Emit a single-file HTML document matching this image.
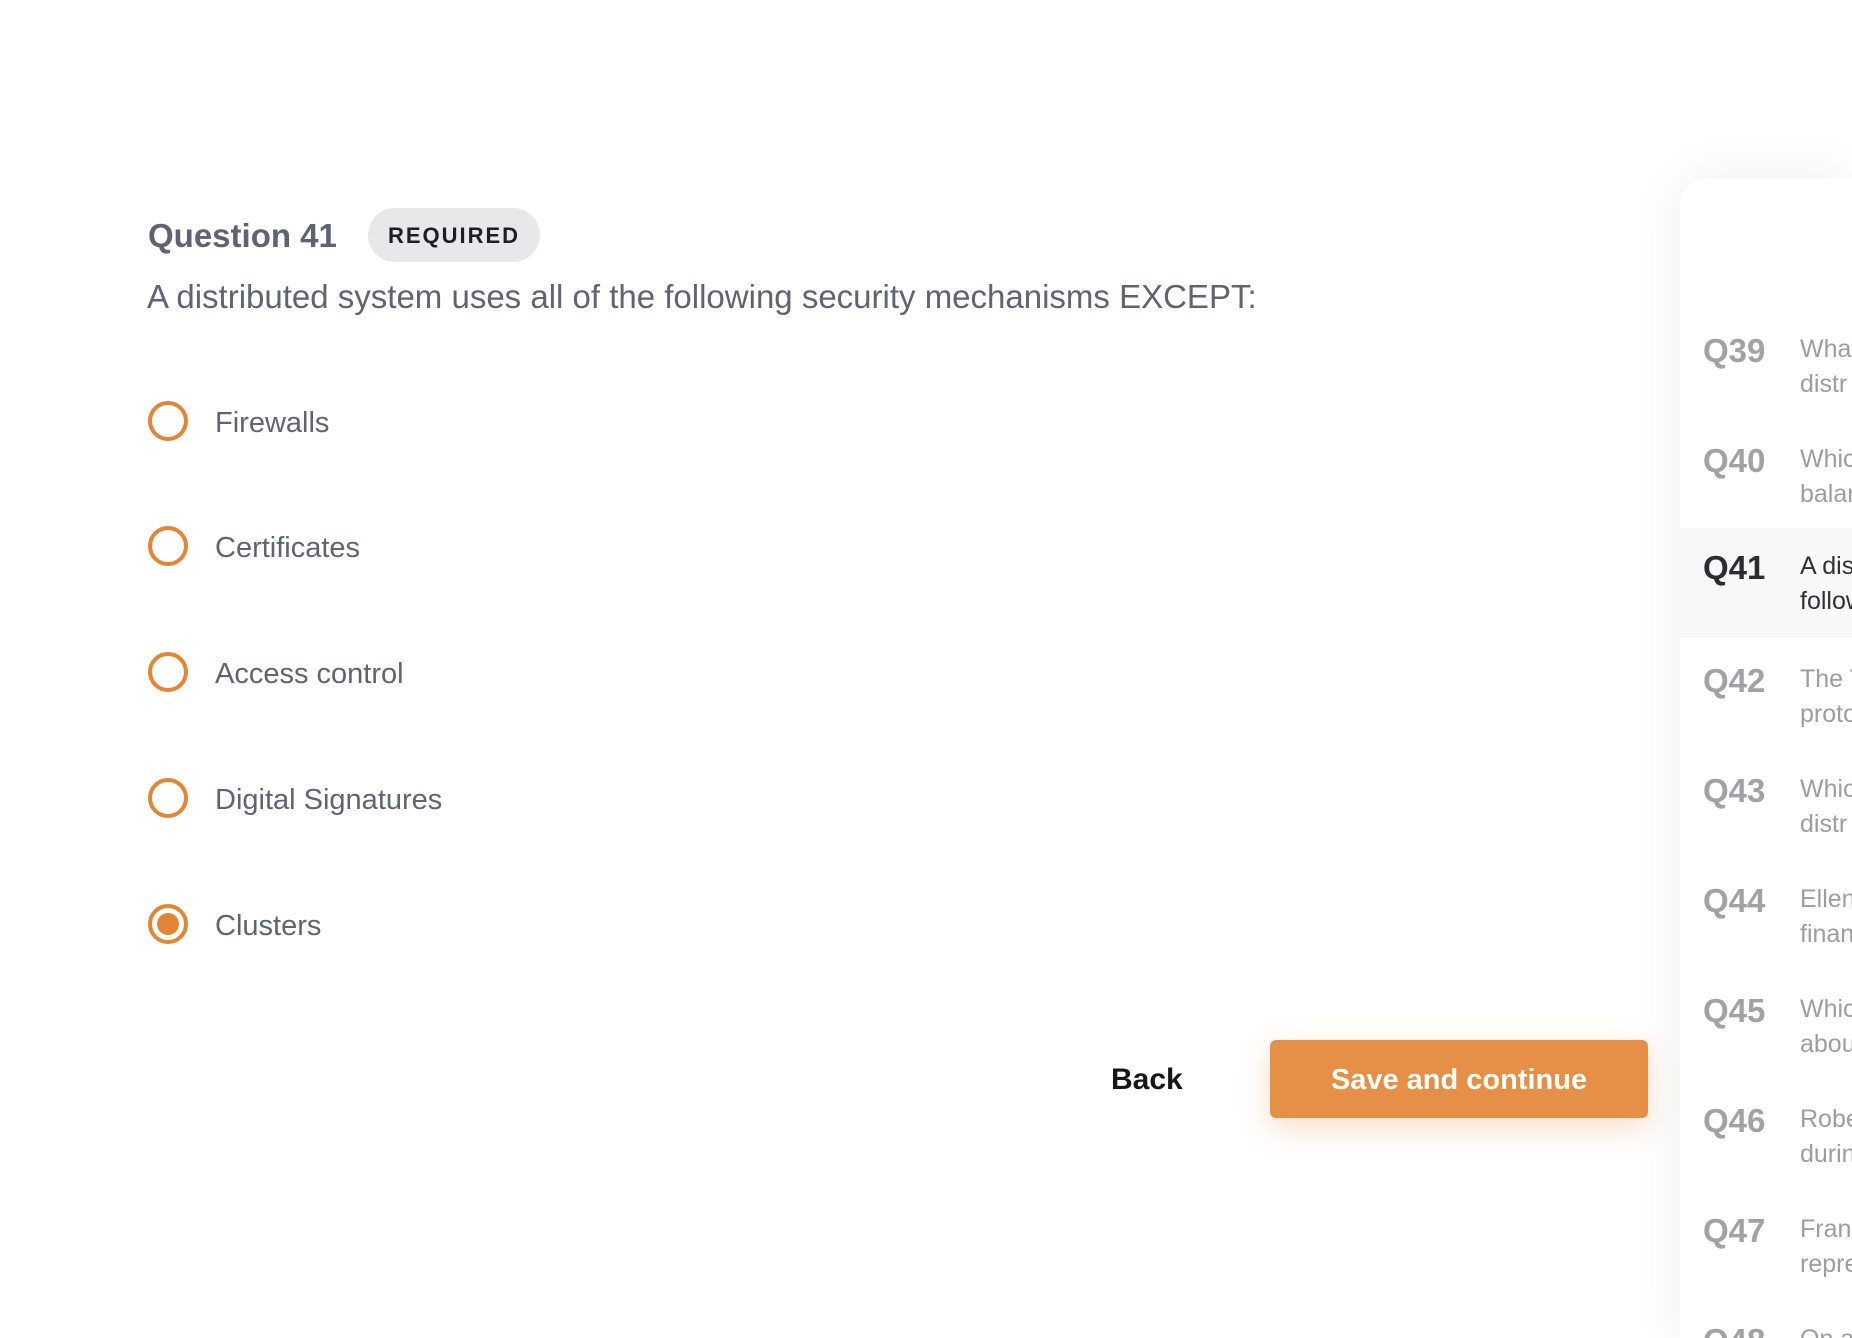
<!DOCTYPE html>
<html><head><meta charset="utf-8"><style>
*{margin:0;padding:0;box-sizing:border-box}
html{width:1852px;height:1338px;overflow:hidden}
body{width:1852px;height:1338px;background:#fff;font-family:"Liberation Sans",sans-serif;position:relative;overflow:hidden;color:#636675}
.abs{position:absolute;white-space:nowrap}
.qt{left:148px;top:217px;font-size:33px;font-weight:bold;color:#5f6270}
.badge{left:368px;top:208px;width:172px;height:54px;border-radius:27px;background:#e8e8ea;color:#1e1f24;font-weight:bold;font-size:22px;letter-spacing:2px;text-align:center;line-height:56px}
.qtext{left:147px;top:278px;font-size:33px;color:#606371}
.radio{position:absolute;left:148px;width:40px;height:40px;border:4px solid #e38533;border-radius:50%}
.radio.sel::after{content:"";position:absolute;left:5px;top:5px;width:22px;height:22px;border-radius:50%;background:#e38533}
.lbl{position:absolute;left:215px;font-size:29px;color:#606371;white-space:nowrap}
.back{left:1111px;top:1063px;font-size:30px;font-weight:bold;color:#16171b}
.btn{position:absolute;left:1270px;top:1040px;width:378px;height:78px;background:#e68f46;border-radius:6px;color:#fff;font-weight:bold;font-size:29px;text-align:center;line-height:80px;box-shadow:0 10px 30px rgba(230,143,70,0.3)}
.card{position:absolute;left:1680px;top:178px;width:172px;height:1160px;background:#fff;border-radius:26px 0 0 0;box-shadow:0 0 50px rgba(0,0,0,0.07)}
.row{position:absolute;left:1680px;width:172px;height:110px;overflow:hidden}
.row .q{position:absolute;left:23px;top:10px;font-size:33px;font-weight:bold;color:#a1a2a6}
.row .t{position:absolute;left:120px;top:10px;font-size:25px;line-height:35px;color:#9c9da2;white-space:nowrap}
.row.cur{background:#f7f8f8}
.row.cur .q{color:#2b2d33}
.row.cur .t{color:#2f3137}
</style></head><body>
<div class="abs qt">Question 41</div>
<div class="abs badge">REQUIRED</div>
<div class="abs qtext">A distributed system uses all of the following security mechanisms EXCEPT:</div>

<div class="radio" style="top:401px"></div><div class="lbl" style="top:407px">Firewalls</div>
<div class="radio" style="top:526px"></div><div class="lbl" style="top:532px">Certificates</div>
<div class="radio" style="top:652px"></div><div class="lbl" style="top:658px">Access control</div>
<div class="radio" style="top:778px"></div><div class="lbl" style="top:784px">Digital Signatures</div>
<div class="radio sel" style="top:904px"></div><div class="lbl" style="top:910px">Clusters</div>

<div class="abs back">Back</div>
<div class="btn">Save and continue</div>

<div class="card"></div>
<div class="row" style="top:322px"><div class="q">Q39</div><div class="t">What<br>distr</div></div>
<div class="row" style="top:432px"><div class="q">Q40</div><div class="t">Which<br>balan</div></div>
<div class="row cur" style="top:528px;height:110px"><div class="q" style="top:21px">Q41</div><div class="t" style="top:21px">A dis<br>follow</div></div>
<div class="row" style="top:652px"><div class="q">Q42</div><div class="t">The T<br>proto</div></div>
<div class="row" style="top:762px"><div class="q">Q43</div><div class="t">Which<br>distr</div></div>
<div class="row" style="top:872px"><div class="q">Q44</div><div class="t">Ellen<br>finan</div></div>
<div class="row" style="top:982px"><div class="q">Q45</div><div class="t">Which<br>abou</div></div>
<div class="row" style="top:1092px"><div class="q">Q46</div><div class="t">Robe<br>durin</div></div>
<div class="row" style="top:1202px"><div class="q">Q47</div><div class="t">Franc<br>repre</div></div>
<div class="row" style="top:1312px;height:26px"><div class="q">Q48</div><div class="t">On a</div></div>
</body></html>
